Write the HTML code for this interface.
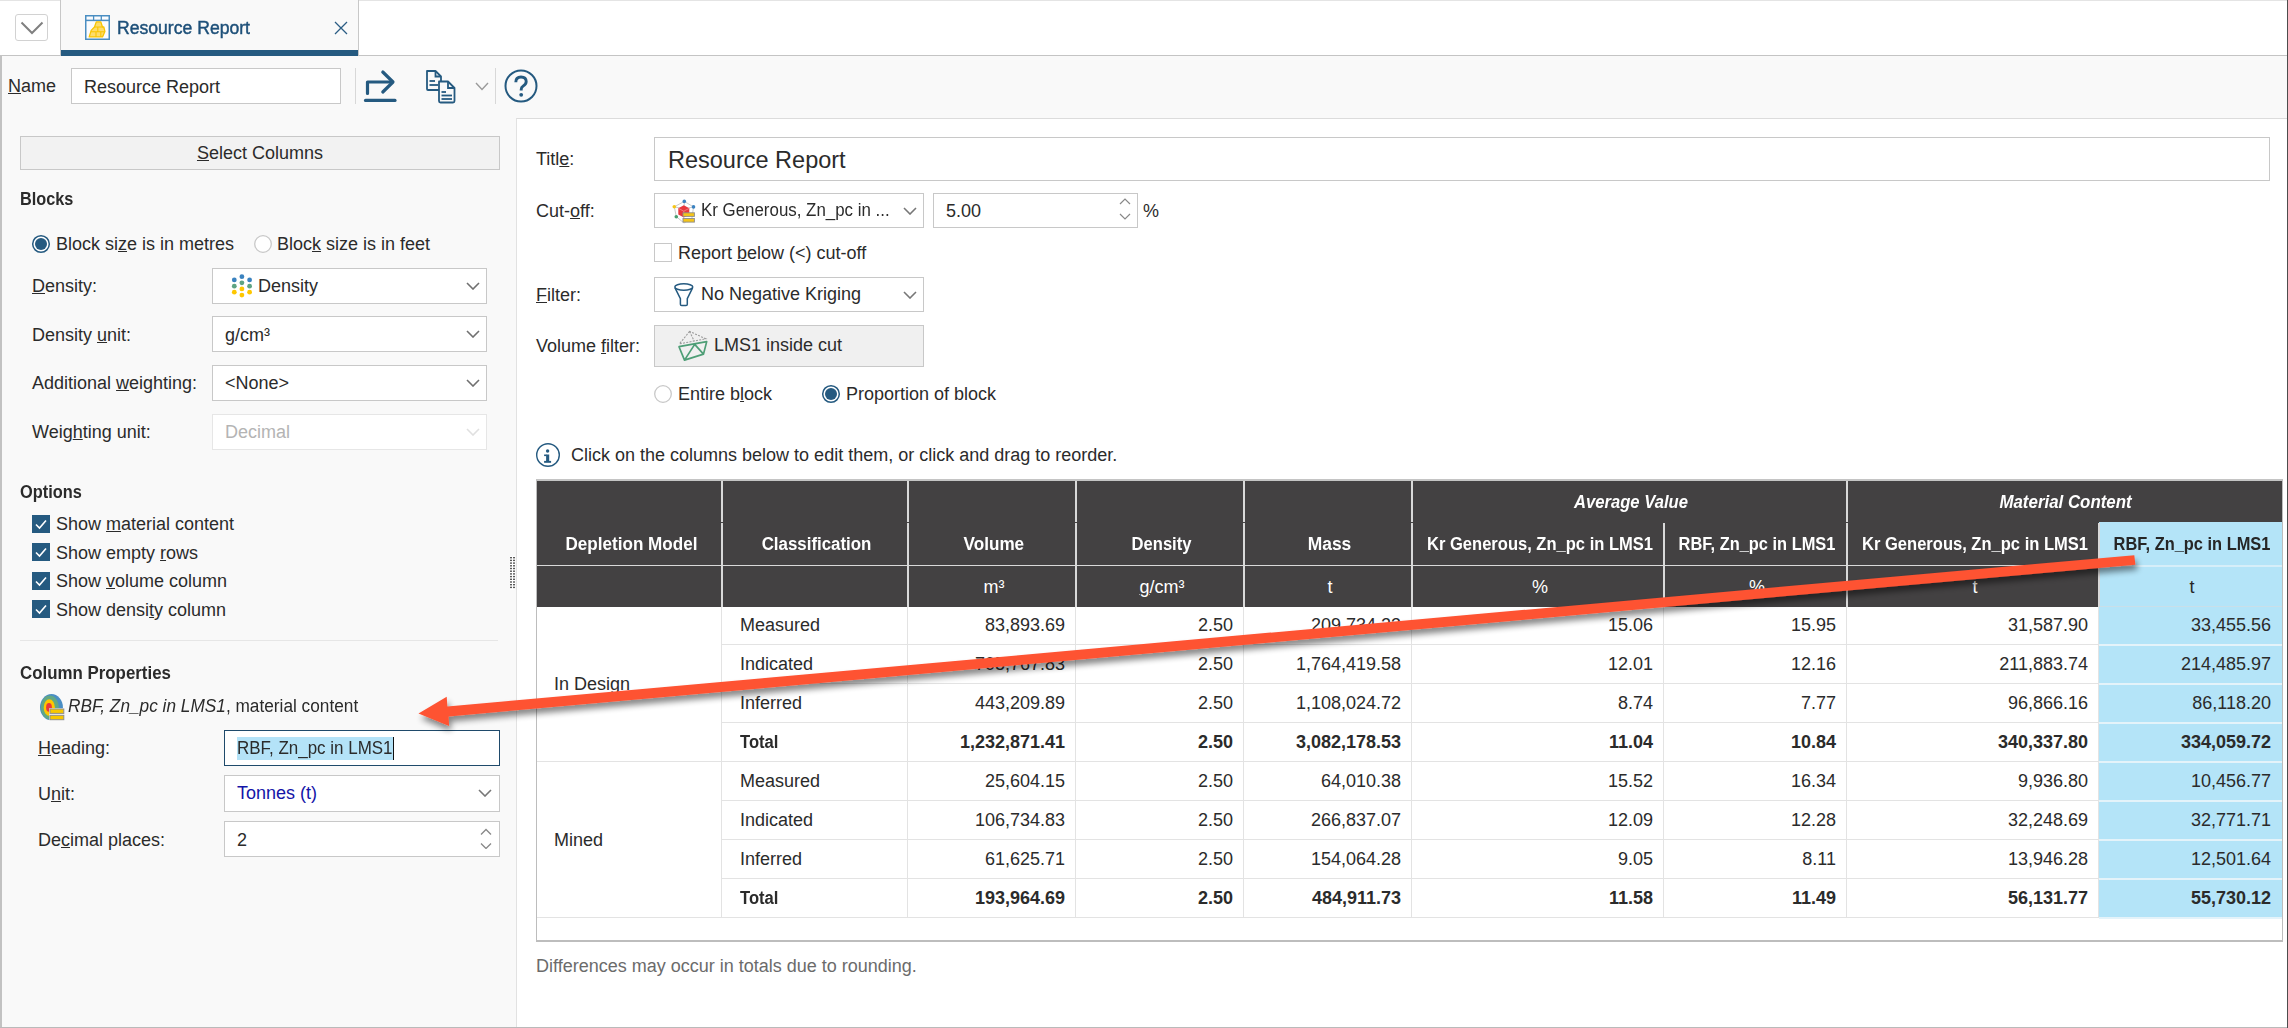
<!DOCTYPE html><html><head><meta charset="utf-8"><style>
html,body{margin:0;padding:0;}
body{width:2288px;height:1028px;position:relative;overflow:hidden;background:#fff;font-family:"Liberation Sans", sans-serif;}
.t{position:absolute;white-space:nowrap;line-height:20px;}
u{text-decoration:underline;text-underline-offset:1px;text-decoration-thickness:1px;}
</style></head><body>
<div style="position:absolute;left:0px;top:0px;width:2288px;height:55px;background:#fff"></div>
<div style="position:absolute;left:0px;top:0px;width:2288px;height:1px;background:#e4e4e4"></div>
<div style="position:absolute;left:0px;top:55px;width:2288px;height:1px;background:#c4c4c4"></div>
<div style="position:absolute;left:15px;top:14px;width:33px;height:27px;background:#fff;border:1px solid #d2d2d2;border-radius:3px;box-sizing:border-box"></div>
<svg width="24" height="14" style="position:absolute;left:20px;top:21px"><path d="M1.5 1.5 L12 12 L22.5 1.5" fill="none" stroke="#808080" stroke-width="2"/></svg>
<div style="position:absolute;left:60px;top:0px;width:299px;height:56px;background:#f9f9f9;border-left:1px solid #c8c8c8;border-right:1px solid #c8c8c8;box-sizing:border-box"></div>
<div style="position:absolute;left:61px;top:50px;width:297px;height:6px;background:#255a80"></div>
<svg width="26" height="26" viewBox="0 0 26 26" style="position:absolute;left:85px;top:15px">
<rect x="0.75" y="0.75" width="23.5" height="23.5" fill="#fbfcfe" stroke="#4a8ec2" stroke-width="1.5"/>
<line x1="0.5" y1="5.4" x2="24.5" y2="5.4" stroke="#4a8ec2" stroke-width="1.5"/>
<line x1="8.6" y1="1" x2="8.6" y2="5.4" stroke="#4a8ec2" stroke-width="1.3"/><line x1="16.3" y1="1" x2="16.3" y2="5.4" stroke="#4a8ec2" stroke-width="1.3"/>
<path d="M4.2 21.9 L6.2 15.4 L9.5 12 L11.3 6.9 L15.8 6.9 L17.5 12 L18.8 12 L19.9 16.4 L17.5 21.9 Z" fill="#fcdc6c" stroke="#f7c400" stroke-width="1.3" stroke-linejoin="round"/>
<path d="M9.5 12 L17.5 12 M6 16.8 L19.5 16.8 M12.8 12 L12.8 16.8 M11 16.8 L11 21.9 M15.8 16.8 L15.8 21.9" fill="none" stroke="#f7c400" stroke-width="1.1"/>
</svg>
<div class="t" style="left:117px;top:18px;font-size:18px;font-weight:normal;color:#1e5079;font-style:normal;-webkit-text-stroke:0.45px #1e5079"><span style="display:inline-block;transform:scaleX(0.9774);transform-origin:left">Resource Report</span></div>
<svg width="14" height="14" style="position:absolute;left:334px;top:21px"><path d="M1 1 L13 13 M13 1 L1 13" stroke="#2b5d84" stroke-width="1.3"/></svg>
<div style="position:absolute;left:0px;top:56px;width:2288px;height:972px;background:#f9f9f9"></div>
<div style="position:absolute;left:0px;top:56px;width:2px;height:972px;background:#c2c2c2"></div>
<div class="t" style="left:8px;top:76px;font-size:18px;font-weight:normal;color:#2b2b2b;font-style:normal;"><u>N</u>ame</div>
<div style="position:absolute;left:71px;top:68px;width:270px;height:36px;background:#fff;border:1px solid #c8c8c8;box-sizing:border-box"></div>
<div class="t" style="left:84px;top:77px;font-size:18px;font-weight:normal;color:#2b2b2b;font-style:normal;">Resource Report</div>
<div style="position:absolute;left:355px;top:68px;width:1px;height:36px;background:#d8d8d8"></div>
<div style="position:absolute;left:495px;top:68px;width:1px;height:36px;background:#d8d8d8"></div>
<svg width="36" height="36" viewBox="0 0 36 36" style="position:absolute;left:362px;top:68px">
<path d="M5.5 25.5 L5.5 14 L30 14" fill="none" stroke="#255a80" stroke-width="3.2" stroke-linecap="round" stroke-linejoin="round"/>
<path d="M20.8 4 L31 14 L20.8 24" fill="none" stroke="#255a80" stroke-width="3.2" stroke-linecap="round" stroke-linejoin="round"/>
<line x1="3.5" y1="32.4" x2="33" y2="32.4" stroke="#255a80" stroke-width="3.2" stroke-linecap="round"/>
</svg>
<svg width="34" height="36" viewBox="0 0 34 36" style="position:absolute;left:424px;top:68px">
<path d="M3 3 L11.5 3 L17 8.5 L17 21 Q17 22 16 22 L4 22 Q3 22 3 21 Z" fill="none" stroke="#255a80" stroke-width="1.8" stroke-linejoin="round"/>
<path d="M11.5 3 L11.5 8.5 L17 8.5" fill="none" stroke="#255a80" stroke-width="1.8"/>
<line x1="5.5" y1="13" x2="11" y2="13" stroke="#255a80" stroke-width="1.8"/><line x1="5.5" y1="17" x2="14" y2="17" stroke="#255a80" stroke-width="1.8"/>
<path d="M15 13.5 L24 13.5 L30.5 20 L30.5 33 Q30.5 34.5 29 34.5 L16.5 34.5 Q15 34.5 15 33 Z" fill="#f9f9f9" stroke="#255a80" stroke-width="1.8" stroke-linejoin="round"/>
<path d="M24 13.5 L24 20 L30.5 20" fill="none" stroke="#255a80" stroke-width="1.8"/>
<line x1="17.5" y1="24" x2="22" y2="24" stroke="#255a80" stroke-width="1.8"/><line x1="17.5" y1="27.5" x2="28" y2="27.5" stroke="#255a80" stroke-width="1.8"/><line x1="17.5" y1="31" x2="28" y2="31" stroke="#255a80" stroke-width="1.8"/>
</svg>
<svg width="14" height="9" style="position:absolute;left:475px;top:82px"><path d="M1 1 L7 7.5 L13 1" fill="none" stroke="#9a9a9a" stroke-width="1.4"/></svg>
<svg width="34" height="34" viewBox="0 0 34 34" style="position:absolute;left:504px;top:69px">
<circle cx="17" cy="17" r="15.5" fill="none" stroke="#255a80" stroke-width="2"/>
<path d="M11.8 13.2 Q11.8 8 17 8 Q22.2 8 22.2 12.6 Q22.2 15.4 19.2 17 Q17.2 18.1 17.2 20.6 L17.2 21.6" fill="none" stroke="#255a80" stroke-width="2.9"/>
<circle cx="17.2" cy="25.8" r="1.9" fill="#255a80"/>
</svg>
<div style="position:absolute;left:20px;top:136px;width:480px;height:34px;background:#f2f2f2;border:1px solid #c8c8c8;box-sizing:border-box"></div>
<div class="t" style="left:-40px;width:600px;top:143px;font-size:18px;font-weight:normal;color:#2b2b2b;font-style:normal;text-align:center;"><u>S</u>elect Columns</div>
<div class="t" style="left:20px;top:189px;font-size:18px;font-weight:bold;color:#2b2b2b;font-style:normal;"><span style="display:inline-block;transform:scaleX(0.9046);transform-origin:left">Blocks</span></div>
<svg width="20" height="20" style="position:absolute;left:31px;top:234px"><circle cx="10" cy="10" r="8.3" fill="#fff" stroke="#255a80" stroke-width="1.5"/><circle cx="10" cy="10" r="6" fill="#255a80"/></svg>
<div class="t" style="left:56px;top:234px;font-size:18px;font-weight:normal;color:#2b2b2b;font-style:normal;">Block si<u>z</u>e is in metres</div>
<svg width="20" height="20" style="position:absolute;left:253px;top:234px"><circle cx="10" cy="10" r="8.3" fill="#fff" stroke="#c8c8c8" stroke-width="1.3"/></svg>
<div class="t" style="left:277px;top:234px;font-size:18px;font-weight:normal;color:#2b2b2b;font-style:normal;">Bloc<u>k</u> size is in feet</div>
<div class="t" style="left:32px;top:276px;font-size:18px;font-weight:normal;color:#2b2b2b;font-style:normal;"><u>D</u>ensity:</div>
<div style="position:absolute;left:212px;top:268px;width:275px;height:36px;background:#fff;border:1px solid #c8c8c8;box-sizing:border-box"></div>
<svg width="26" height="26" style="position:absolute;left:229px;top:274px">
<circle cx="5.3" cy="5.9" r="2.4" fill="#3a82bf"/><circle cx="12.9" cy="2.7" r="2.4" fill="#3a82bf"/><circle cx="20.6" cy="5.9" r="2.4" fill="#3a82bf"/>
<circle cx="5.3" cy="12.2" r="2.4" fill="#5da383"/><circle cx="12.9" cy="8.8" r="2.4" fill="#5da383"/><circle cx="20.6" cy="12.2" r="2.4" fill="#5da383"/>
<circle cx="5.3" cy="18.2" r="2.4" fill="#fec700"/><circle cx="12.9" cy="14.9" r="2.4" fill="#fec700"/><circle cx="20.6" cy="18.2" r="2.4" fill="#fec700"/><circle cx="12.9" cy="21.1" r="2.4" fill="#fec700"/>
</svg>
<div class="t" style="left:258px;top:276px;font-size:18px;font-weight:normal;color:#2b2b2b;font-style:normal;">Density</div>
<svg width="14" height="8" viewBox="0 0 14 8" style="position:absolute;left:466px;top:281.5px"><path d="M1 1 L7 7 L13 1" fill="none" stroke="#707070" stroke-width="1.6"/></svg>
<div class="t" style="left:32px;top:325px;font-size:18px;font-weight:normal;color:#2b2b2b;font-style:normal;">Density <u>u</u>nit:</div>
<div style="position:absolute;left:212px;top:316px;width:275px;height:36px;background:#fff;border:1px solid #c8c8c8;box-sizing:border-box"></div>
<div class="t" style="left:225px;top:325px;font-size:18px;font-weight:normal;color:#2b2b2b;font-style:normal;">g/cm³</div>
<svg width="14" height="8" viewBox="0 0 14 8" style="position:absolute;left:466px;top:329.5px"><path d="M1 1 L7 7 L13 1" fill="none" stroke="#707070" stroke-width="1.6"/></svg>
<div class="t" style="left:32px;top:373px;font-size:18px;font-weight:normal;color:#2b2b2b;font-style:normal;">Additional <u>w</u>eighting:</div>
<div style="position:absolute;left:212px;top:365px;width:275px;height:36px;background:#fff;border:1px solid #c8c8c8;box-sizing:border-box"></div>
<div class="t" style="left:225px;top:373px;font-size:18px;font-weight:normal;color:#2b2b2b;font-style:normal;">&lt;None&gt;</div>
<svg width="14" height="8" viewBox="0 0 14 8" style="position:absolute;left:466px;top:378.5px"><path d="M1 1 L7 7 L13 1" fill="none" stroke="#707070" stroke-width="1.6"/></svg>
<div class="t" style="left:32px;top:422px;font-size:18px;font-weight:normal;color:#2b2b2b;font-style:normal;">Weig<u>h</u>ting unit:</div>
<div style="position:absolute;left:212px;top:414px;width:275px;height:36px;background:#fff;border:1px solid #e6e6e6;box-sizing:border-box"></div>
<div class="t" style="left:225px;top:422px;font-size:18px;font-weight:normal;color:#b4b4b4;font-style:normal;">Decimal</div>
<svg width="14" height="8" viewBox="0 0 14 8" style="position:absolute;left:466px;top:427.5px"><path d="M1 1 L7 7 L13 1" fill="none" stroke="#e0e0e0" stroke-width="1.6"/></svg>
<div class="t" style="left:20px;top:482px;font-size:18px;font-weight:bold;color:#2b2b2b;font-style:normal;"><span style="display:inline-block;transform:scaleX(0.9088);transform-origin:left">Options</span></div>
<svg width="18" height="18" style="position:absolute;left:32px;top:515px"><rect width="18" height="18" fill="#255a80"/><path d="M4 9.5 L7.5 13 L14 5.5" fill="none" stroke="#fff" stroke-width="1.6"/></svg>
<div class="t" style="left:56px;top:514px;font-size:18px;font-weight:normal;color:#2b2b2b;font-style:normal;">Show <u>m</u>aterial content</div>
<svg width="18" height="18" style="position:absolute;left:32px;top:543px"><rect width="18" height="18" fill="#255a80"/><path d="M4 9.5 L7.5 13 L14 5.5" fill="none" stroke="#fff" stroke-width="1.6"/></svg>
<div class="t" style="left:56px;top:543px;font-size:18px;font-weight:normal;color:#2b2b2b;font-style:normal;">Show empty <u>r</u>ows</div>
<svg width="18" height="18" style="position:absolute;left:32px;top:572px"><rect width="18" height="18" fill="#255a80"/><path d="M4 9.5 L7.5 13 L14 5.5" fill="none" stroke="#fff" stroke-width="1.6"/></svg>
<div class="t" style="left:56px;top:571px;font-size:18px;font-weight:normal;color:#2b2b2b;font-style:normal;">Show <u>v</u>olume column</div>
<svg width="18" height="18" style="position:absolute;left:32px;top:600px"><rect width="18" height="18" fill="#255a80"/><path d="M4 9.5 L7.5 13 L14 5.5" fill="none" stroke="#fff" stroke-width="1.6"/></svg>
<div class="t" style="left:56px;top:600px;font-size:18px;font-weight:normal;color:#2b2b2b;font-style:normal;">Show densi<u>t</u>y column</div>
<svg width="6" height="34" style="position:absolute;left:510px;top:556px"><rect x="0" y="0" width="5" height="34" fill="#fff"/><rect x="0" y="1.0" width="2" height="1.4" fill="#5a5a5a"/><rect x="3" y="1.0" width="2" height="1.4" fill="#5a5a5a"/><rect x="0" y="3.7" width="2" height="1.4" fill="#5a5a5a"/><rect x="3" y="3.7" width="2" height="1.4" fill="#5a5a5a"/><rect x="0" y="6.4" width="2" height="1.4" fill="#5a5a5a"/><rect x="3" y="6.4" width="2" height="1.4" fill="#5a5a5a"/><rect x="0" y="9.1" width="2" height="1.4" fill="#5a5a5a"/><rect x="3" y="9.1" width="2" height="1.4" fill="#5a5a5a"/><rect x="0" y="11.8" width="2" height="1.4" fill="#5a5a5a"/><rect x="3" y="11.8" width="2" height="1.4" fill="#5a5a5a"/><rect x="0" y="14.5" width="2" height="1.4" fill="#5a5a5a"/><rect x="3" y="14.5" width="2" height="1.4" fill="#5a5a5a"/><rect x="0" y="17.2" width="2" height="1.4" fill="#5a5a5a"/><rect x="3" y="17.2" width="2" height="1.4" fill="#5a5a5a"/><rect x="0" y="19.9" width="2" height="1.4" fill="#5a5a5a"/><rect x="3" y="19.9" width="2" height="1.4" fill="#5a5a5a"/><rect x="0" y="22.6" width="2" height="1.4" fill="#5a5a5a"/><rect x="3" y="22.6" width="2" height="1.4" fill="#5a5a5a"/><rect x="0" y="25.3" width="2" height="1.4" fill="#5a5a5a"/><rect x="3" y="25.3" width="2" height="1.4" fill="#5a5a5a"/><rect x="0" y="28.0" width="2" height="1.4" fill="#5a5a5a"/><rect x="3" y="28.0" width="2" height="1.4" fill="#5a5a5a"/><rect x="0" y="30.7" width="2" height="1.4" fill="#5a5a5a"/><rect x="3" y="30.7" width="2" height="1.4" fill="#5a5a5a"/></svg>
<div style="position:absolute;left:20px;top:640px;width:478px;height:1px;background:#e6e6e6"></div>
<div class="t" style="left:20px;top:663px;font-size:18px;font-weight:bold;color:#2b2b2b;font-style:normal;"><span style="display:inline-block;transform:scaleX(0.9371);transform-origin:left">Column Properties</span></div>
<svg width="28" height="30" style="position:absolute;left:39px;top:693px">
<ellipse cx="12.45" cy="14.2" rx="11.45" ry="13.1" fill="#4a8ec4"/>
<ellipse cx="10.8" cy="14.4" rx="9" ry="11.9" fill="#62a884"/>
<ellipse cx="10.3" cy="14.6" rx="5.6" ry="8.4" fill="#fec700"/>
<ellipse cx="10" cy="14.4" rx="2.9" ry="4.4" fill="#e8383d"/>
<rect x="10.2" y="15.2" width="15.2" height="13" fill="#fafafa"/>
<rect x="11" y="16" width="13.8" height="4.4" fill="#f8c800" stroke="#8e8e8e" stroke-width="1"/>
<rect x="11" y="22.3" width="13.8" height="4.4" fill="#f8c800" stroke="#8e8e8e" stroke-width="1"/>
</svg>
<div class="t" style="left:68px;top:696px;font-size:18px;font-weight:normal;color:#2b2b2b;font-style:normal;"><span style="display:inline-block;transform:scaleX(0.9583);transform-origin:left"><i>RBF, Zn_pc in LMS1</i>, material content</span></div>
<div class="t" style="left:38px;top:738px;font-size:18px;font-weight:normal;color:#2b2b2b;font-style:normal;"><u>H</u>eading:</div>
<div style="position:absolute;left:224px;top:730px;width:276px;height:36px;background:#fff;border:1.5px solid #1f4a6b;box-sizing:border-box"></div>
<div style="position:absolute;left:237px;top:737px;width:156px;height:23px;background:#b4e3f8"></div>
<div class="t" style="left:237px;top:738px;font-size:18px;font-weight:normal;color:#2b2b2b;font-style:normal;"><span style="display:inline-block;transform:scaleX(0.9420);transform-origin:left">RBF, Zn_pc in LMS1</span></div>
<div style="position:absolute;left:393px;top:737px;width:1px;height:23px;background:#111"></div>
<div class="t" style="left:38px;top:784px;font-size:18px;font-weight:normal;color:#2b2b2b;font-style:normal;">U<u>n</u>it:</div>
<div style="position:absolute;left:224px;top:775px;width:276px;height:37px;background:#fff;border:1px solid #c8c8c8;box-sizing:border-box"></div>
<div class="t" style="left:237px;top:783px;font-size:18px;font-weight:normal;color:#1414a8;font-style:normal;">Tonnes (t)</div>
<svg width="14" height="8" viewBox="0 0 14 8" style="position:absolute;left:478px;top:789px"><path d="M1 1 L7 7 L13 1" fill="none" stroke="#777" stroke-width="1.6"/></svg>
<div class="t" style="left:38px;top:830px;font-size:18px;font-weight:normal;color:#2b2b2b;font-style:normal;">De<u>c</u>imal places:</div>
<div style="position:absolute;left:224px;top:821px;width:276px;height:36px;background:#fff;border:1px solid #c8c8c8;box-sizing:border-box"></div>
<div class="t" style="left:237px;top:830px;font-size:18px;font-weight:normal;color:#2b2b2b;font-style:normal;">2</div>
<svg width="12" height="22" style="position:absolute;left:480px;top:827px"><path d="M1 7.5 L6 2.5 L11 7.5 M1 16.5 L6 21.5 L11 16.5" fill="none" stroke="#888" stroke-width="1.3"/></svg>
<div style="position:absolute;left:516px;top:118px;width:1771px;height:909px;background:#fff;border-left:1px solid #e2e2e2;border-top:1px solid #dcdcdc;box-sizing:border-box"></div>
<div class="t" style="left:536px;top:149px;font-size:18px;font-weight:normal;color:#2b2b2b;font-style:normal;">Titl<u>e</u>:</div>
<div style="position:absolute;left:654px;top:137px;width:1616px;height:44px;background:#fff;border:1px solid #c8c8c8;box-sizing:border-box"></div>
<div class="t" style="left:668px;top:149.5px;font-size:23.5px;font-weight:normal;color:#2b2b2b;font-style:normal;line-height:26px;margin-top:-3px">Resource Report</div>
<div class="t" style="left:536px;top:201px;font-size:18px;font-weight:normal;color:#2b2b2b;font-style:normal;">Cut-<u>o</u>ff:</div>
<div style="position:absolute;left:654px;top:193px;width:270px;height:35px;background:#fff;border:1px solid #c8c8c8;box-sizing:border-box"></div>
<svg width="28" height="28" style="position:absolute;left:670px;top:198px">
<path d="M14.3 3.4 L23.5 8.9 L22 20 L14 25 L6.3 18.7 L4.3 8.8 Z M4.3 8.8 L14 11 L23.5 8.9 M14.3 3.4 L14 11" fill="none" stroke="#c4c4c4" stroke-width="0.9"/>
<path d="M13.8 7.2 L19.3 10.3 L19.3 16.5 L13.8 19.6 L8.3 16.5 L8.3 10.3 Z" fill="#e8383d"/>
<path d="M8.3 10.3 L13.8 13.2 L19.3 10.3 M13.8 13.2 L13.8 19.6" fill="none" stroke="#f08a8c" stroke-width="0.8"/>
<circle cx="14.3" cy="3.4" r="1.8" fill="#3b82c0"/><circle cx="23.5" cy="8.9" r="1.8" fill="#3b82c0"/><circle cx="4.3" cy="8.8" r="1.8" fill="#f5c518"/><circle cx="6.3" cy="18.7" r="1.8" fill="#4a9e70"/>
<rect x="13" y="14.8" width="11.4" height="3.6" fill="#f5c518" stroke="#8c8c8c" stroke-width="0.9"/><rect x="13" y="20.5" width="11.4" height="3.6" fill="#f5c518" stroke="#8c8c8c" stroke-width="0.9"/>
</svg>
<div class="t" style="left:701px;top:200px;font-size:18px;font-weight:normal;color:#2b2b2b;font-style:normal;"><span style="display:inline-block;transform:scaleX(0.9379);transform-origin:left">Kr Generous, Zn_pc in ...</span></div>
<svg width="14" height="8" viewBox="0 0 14 8" style="position:absolute;left:903px;top:207px"><path d="M1 1 L7 7 L13 1" fill="none" stroke="#777" stroke-width="1.6"/></svg>
<div style="position:absolute;left:933px;top:193px;width:205px;height:35px;background:#fff;border:1px solid #c8c8c8;box-sizing:border-box"></div>
<div class="t" style="left:946px;top:201px;font-size:18px;font-weight:normal;color:#2b2b2b;font-style:normal;">5.00</div>
<svg width="12" height="24" style="position:absolute;left:1119px;top:197px"><path d="M1 7 L6 2 L11 7 M1 17 L6 22 L11 17" fill="none" stroke="#888" stroke-width="1.2"/></svg>
<div class="t" style="left:1143px;top:201px;font-size:18px;font-weight:normal;color:#2b2b2b;font-style:normal;">%</div>
<div style="position:absolute;left:654px;top:243px;width:18px;height:19px;background:#fff;border:1.3px solid #c8c8c8;box-sizing:border-box"></div>
<div class="t" style="left:678px;top:243px;font-size:18px;font-weight:normal;color:#2b2b2b;font-style:normal;">Report <u>b</u>elow (&lt;) cut-off</div>
<div class="t" style="left:536px;top:285px;font-size:18px;font-weight:normal;color:#2b2b2b;font-style:normal;"><u>F</u>ilter:</div>
<div style="position:absolute;left:654px;top:277px;width:270px;height:35px;background:#fff;border:1px solid #c8c8c8;box-sizing:border-box"></div>
<svg width="26" height="30" style="position:absolute;left:672px;top:281px"><ellipse cx="11.8" cy="6" rx="9" ry="3.2" fill="none" stroke="#255a80" stroke-width="1.5"/><path d="M3 6.8 L8.4 17.6 L8.4 23.3 Q8.4 24.6 9.7 24.6 L14 24.6 Q15.3 24.6 15.3 23.3 L15.3 17.6 L20.6 6.8" fill="none" stroke="#255a80" stroke-width="1.5" stroke-linejoin="round"/></svg>
<div class="t" style="left:701px;top:284px;font-size:18px;font-weight:normal;color:#2b2b2b;font-style:normal;">No Negative Kriging</div>
<svg width="14" height="8" viewBox="0 0 14 8" style="position:absolute;left:903px;top:291px"><path d="M1 1 L7 7 L13 1" fill="none" stroke="#777" stroke-width="1.6"/></svg>
<div class="t" style="left:536px;top:336px;font-size:18px;font-weight:normal;color:#2b2b2b;font-style:normal;">Volume <u>f</u>ilter:</div>
<div style="position:absolute;left:654px;top:325px;width:270px;height:42px;background:#f0f0f0;border:1px solid #c8c8c8;box-sizing:border-box"></div>
<svg width="34" height="34" style="position:absolute;left:676px;top:329px">
<path d="M13.6 2.4 L3.4 14.9 L29.8 9.8 Z M13.6 2.4 L18.2 12.1" fill="none" stroke="#9a9a9a" stroke-width="1.1" stroke-dasharray="2 1.3"/>
<path d="M3 17.7 L30.7 12.6 L27.5 25.1 L8.5 31.1 Z M18.7 15.4 L8.5 31.1 M18.7 15.4 L27.5 25.1" fill="none" stroke="#4e9e76" stroke-width="1.7" stroke-linejoin="round"/>
</svg>
<div class="t" style="left:714px;top:335px;font-size:18px;font-weight:normal;color:#2b2b2b;font-style:normal;">LMS1 inside cut</div>
<svg width="20" height="20" style="position:absolute;left:653px;top:384px"><circle cx="10" cy="10" r="8.3" fill="#fff" stroke="#c8c8c8" stroke-width="1.3"/></svg>
<div class="t" style="left:678px;top:384px;font-size:18px;font-weight:normal;color:#2b2b2b;font-style:normal;">Entire b<u>l</u>ock</div>
<svg width="20" height="20" style="position:absolute;left:821px;top:384px"><circle cx="10" cy="10" r="8.3" fill="#fff" stroke="#255a80" stroke-width="1.5"/><circle cx="10" cy="10" r="6" fill="#255a80"/></svg>
<div class="t" style="left:846px;top:384px;font-size:18px;font-weight:normal;color:#2b2b2b;font-style:normal;">Proportion of block</div>
<svg width="26" height="26" style="position:absolute;left:535px;top:442px"><circle cx="13" cy="13" r="11.3" fill="none" stroke="#255a80" stroke-width="1.4"/><circle cx="12.6" cy="9" r="1.7" fill="#255a80"/><rect x="11.1" y="12.5" width="3.1" height="7.5" fill="#255a80"/><rect x="9.1" y="12.5" width="2.5" height="1.6" fill="#255a80"/><rect x="9.1" y="18.9" width="7" height="1.9" fill="#255a80"/></svg>
<div class="t" style="left:571px;top:445px;font-size:18px;font-weight:normal;color:#2b2b2b;font-style:normal;">Click on the columns below to edit them, or click and drag to reorder.</div>
<div style="position:absolute;left:536px;top:479px;width:1747px;height:463px;background:#fff;border:1px solid #bdbdbd;border-top:2px solid #c4c4c4;border-bottom:2px solid #bdbdbd;box-sizing:border-box"></div>
<div style="position:absolute;left:537px;top:481px;width:1745px;height:126px;background:#434142"></div>
<div style="position:absolute;left:2099px;top:522px;width:183px;height:85px;background:#b4e4f8"></div>
<div style="position:absolute;left:721px;top:481px;width:2px;height:41px;background:#d9d9d9"></div>
<div style="position:absolute;left:721px;top:523px;width:2px;height:42px;background:#d9d9d9"></div>
<div style="position:absolute;left:721px;top:566px;width:2px;height:41px;background:#d9d9d9"></div>
<div style="position:absolute;left:907px;top:481px;width:2px;height:41px;background:#d9d9d9"></div>
<div style="position:absolute;left:907px;top:523px;width:2px;height:42px;background:#d9d9d9"></div>
<div style="position:absolute;left:907px;top:566px;width:2px;height:41px;background:#d9d9d9"></div>
<div style="position:absolute;left:1075px;top:481px;width:2px;height:41px;background:#d9d9d9"></div>
<div style="position:absolute;left:1075px;top:523px;width:2px;height:42px;background:#d9d9d9"></div>
<div style="position:absolute;left:1075px;top:566px;width:2px;height:41px;background:#d9d9d9"></div>
<div style="position:absolute;left:1243px;top:481px;width:2px;height:41px;background:#d9d9d9"></div>
<div style="position:absolute;left:1243px;top:523px;width:2px;height:42px;background:#d9d9d9"></div>
<div style="position:absolute;left:1243px;top:566px;width:2px;height:41px;background:#d9d9d9"></div>
<div style="position:absolute;left:1411px;top:481px;width:2px;height:41px;background:#d9d9d9"></div>
<div style="position:absolute;left:1411px;top:523px;width:2px;height:42px;background:#d9d9d9"></div>
<div style="position:absolute;left:1411px;top:566px;width:2px;height:41px;background:#d9d9d9"></div>
<div style="position:absolute;left:1663px;top:523px;width:2px;height:42px;background:#d9d9d9"></div>
<div style="position:absolute;left:1663px;top:566px;width:2px;height:41px;background:#d9d9d9"></div>
<div style="position:absolute;left:1846px;top:481px;width:2px;height:41px;background:#d9d9d9"></div>
<div style="position:absolute;left:1846px;top:523px;width:2px;height:42px;background:#d9d9d9"></div>
<div style="position:absolute;left:1846px;top:566px;width:2px;height:41px;background:#d9d9d9"></div>
<div style="position:absolute;left:2098px;top:523px;width:2px;height:42px;background:#d9d9d9"></div>
<div style="position:absolute;left:2098px;top:566px;width:2px;height:41px;background:#d9d9d9"></div>
<div style="position:absolute;left:537px;top:565px;width:1745px;height:1.3px;background:#d9d9d9"></div>
<div style="position:absolute;left:2099px;top:565px;width:183px;height:1.5px;background:#d6eef9"></div>
<div style="position:absolute;left:2099px;top:606px;width:183px;height:1px;background:#c9dfe9"></div>
<div class="t" style="left:331px;width:600px;top:534px;font-size:18px;font-weight:bold;color:#fff;font-style:normal;text-align:center;"><span style="display:inline-block;transform:scaleX(0.9496);transform-origin:center">Depletion Model</span></div>
<div class="t" style="left:517px;width:600px;top:534px;font-size:18px;font-weight:bold;color:#fff;font-style:normal;text-align:center;"><span style="display:inline-block;transform:scaleX(0.9372);transform-origin:center">Classification</span></div>
<div class="t" style="left:694px;width:600px;top:534px;font-size:18px;font-weight:bold;color:#fff;font-style:normal;text-align:center;"><span style="display:inline-block;transform:scaleX(0.9515);transform-origin:center">Volume</span></div>
<div class="t" style="left:862px;width:600px;top:534px;font-size:18px;font-weight:bold;color:#fff;font-style:normal;text-align:center;"><span style="display:inline-block;transform:scaleX(0.9211);transform-origin:center">Density</span></div>
<div class="t" style="left:1030px;width:600px;top:534px;font-size:18px;font-weight:bold;color:#fff;font-style:normal;text-align:center;"><span style="display:inline-block;transform:scaleX(0.9682);transform-origin:center">Mass</span></div>
<div class="t" style="left:1240px;width:600px;top:534px;font-size:18px;font-weight:bold;color:#fff;font-style:normal;text-align:center;"><span style="display:inline-block;transform:scaleX(0.9185);transform-origin:center">Kr Generous, Zn_pc in LMS1</span></div>
<div class="t" style="left:1457px;width:600px;top:534px;font-size:18px;font-weight:bold;color:#fff;font-style:normal;text-align:center;"><span style="display:inline-block;transform:scaleX(0.9115);transform-origin:center">RBF, Zn_pc in LMS1</span></div>
<div class="t" style="left:1675px;width:600px;top:534px;font-size:18px;font-weight:bold;color:#fff;font-style:normal;text-align:center;"><span style="display:inline-block;transform:scaleX(0.9185);transform-origin:center">Kr Generous, Zn_pc in LMS1</span></div>
<div class="t" style="left:1892px;width:600px;top:534px;font-size:18px;font-weight:bold;color:#262626;font-style:normal;text-align:center;"><span style="display:inline-block;transform:scaleX(0.9115);transform-origin:center">RBF, Zn_pc in LMS1</span></div>
<div class="t" style="left:1331px;width:600px;top:492px;font-size:17.5px;font-weight:bold;color:#fff;font-style:italic;text-align:center;"><span style="display:inline-block;transform:scaleX(0.9501);transform-origin:center">Average Value</span></div>
<div class="t" style="left:1766px;width:600px;top:492px;font-size:17.5px;font-weight:bold;color:#fff;font-style:italic;text-align:center;"><span style="display:inline-block;transform:scaleX(0.9649);transform-origin:center">Material Content</span></div>
<div class="t" style="left:694px;width:600px;top:577px;font-size:18px;font-weight:normal;color:#fff;font-style:normal;text-align:center;">m³</div>
<div class="t" style="left:862px;width:600px;top:577px;font-size:18px;font-weight:normal;color:#fff;font-style:normal;text-align:center;"><u>g</u>/cm³</div>
<div class="t" style="left:1030px;width:600px;top:577px;font-size:18px;font-weight:normal;color:#fff;font-style:normal;text-align:center;">t</div>
<div class="t" style="left:1240px;width:600px;top:577px;font-size:18px;font-weight:normal;color:#fff;font-style:normal;text-align:center;">%</div>
<div class="t" style="left:1457px;width:600px;top:577px;font-size:18px;font-weight:normal;color:#fff;font-style:normal;text-align:center;">%</div>
<div class="t" style="left:1675px;width:600px;top:577px;font-size:18px;font-weight:normal;color:#fff;font-style:normal;text-align:center;">t</div>
<div class="t" style="left:1892px;width:600px;top:577px;font-size:18px;font-weight:normal;color:#262626;font-style:normal;text-align:center;">t</div>
<div style="position:absolute;left:2099px;top:607px;width:183px;height:39px;background:#b4e4f8"></div>
<div style="position:absolute;left:2099px;top:646px;width:183px;height:39px;background:#b4e4f8"></div>
<div style="position:absolute;left:2099px;top:685px;width:183px;height:39px;background:#b4e4f8"></div>
<div style="position:absolute;left:2099px;top:724px;width:183px;height:39px;background:#b4e4f8"></div>
<div style="position:absolute;left:2099px;top:763px;width:183px;height:39px;background:#b4e4f8"></div>
<div style="position:absolute;left:2099px;top:802px;width:183px;height:39px;background:#b4e4f8"></div>
<div style="position:absolute;left:2099px;top:841px;width:183px;height:39px;background:#b4e4f8"></div>
<div style="position:absolute;left:2099px;top:880px;width:183px;height:39px;background:#b4e4f8"></div>
<div style="position:absolute;left:721px;top:607px;width:1px;height:311px;background:#e3e3e3"></div>
<div style="position:absolute;left:907px;top:607px;width:1px;height:311px;background:#e3e3e3"></div>
<div style="position:absolute;left:1075px;top:607px;width:1px;height:311px;background:#e3e3e3"></div>
<div style="position:absolute;left:1243px;top:607px;width:1px;height:311px;background:#e3e3e3"></div>
<div style="position:absolute;left:1411px;top:607px;width:1px;height:311px;background:#e3e3e3"></div>
<div style="position:absolute;left:1663px;top:607px;width:1px;height:311px;background:#e3e3e3"></div>
<div style="position:absolute;left:1846px;top:607px;width:1px;height:311px;background:#e3e3e3"></div>
<div style="position:absolute;left:2098px;top:607px;width:1px;height:311px;background:#e3e3e3"></div>
<div style="position:absolute;left:722px;top:644px;width:1560px;height:1px;background:#e3e3e3"></div>
<div style="position:absolute;left:722px;top:683px;width:1560px;height:1px;background:#e3e3e3"></div>
<div style="position:absolute;left:722px;top:722px;width:1560px;height:1px;background:#e3e3e3"></div>
<div style="position:absolute;left:537px;top:761px;width:1745px;height:1px;background:#e3e3e3"></div>
<div style="position:absolute;left:722px;top:800px;width:1560px;height:1px;background:#e3e3e3"></div>
<div style="position:absolute;left:722px;top:839px;width:1560px;height:1px;background:#e3e3e3"></div>
<div style="position:absolute;left:722px;top:878px;width:1560px;height:1px;background:#e3e3e3"></div>
<div style="position:absolute;left:537px;top:917px;width:1745px;height:1px;background:#e3e3e3"></div>
<div style="position:absolute;left:2099px;top:644px;width:183px;height:1.5px;background:#e4f3fa"></div>
<div style="position:absolute;left:2099px;top:683px;width:183px;height:1.5px;background:#e4f3fa"></div>
<div style="position:absolute;left:2099px;top:722px;width:183px;height:1.5px;background:#e4f3fa"></div>
<div style="position:absolute;left:2099px;top:761px;width:183px;height:1.5px;background:#e4f3fa"></div>
<div style="position:absolute;left:2099px;top:800px;width:183px;height:1.5px;background:#e4f3fa"></div>
<div style="position:absolute;left:2099px;top:839px;width:183px;height:1.5px;background:#e4f3fa"></div>
<div style="position:absolute;left:2099px;top:878px;width:183px;height:1.5px;background:#e4f3fa"></div>
<div style="position:absolute;left:2099px;top:917px;width:183px;height:1.5px;background:#e4f3fa"></div>
<div class="t" style="left:740px;top:615px;font-size:18px;font-weight:normal;color:#2b2b2b;font-style:normal;">Measured</div>
<div class="t" style="right:1223px;top:615px;font-size:18px;font-weight:normal;color:#2b2b2b;font-style:normal;text-align:right;">83,893.69</div>
<div class="t" style="right:1055px;top:615px;font-size:18px;font-weight:normal;color:#2b2b2b;font-style:normal;text-align:right;">2.50</div>
<div class="t" style="right:887px;top:615px;font-size:18px;font-weight:normal;color:#2b2b2b;font-style:normal;text-align:right;">209,734.23</div>
<div class="t" style="right:635px;top:615px;font-size:18px;font-weight:normal;color:#2b2b2b;font-style:normal;text-align:right;">15.06</div>
<div class="t" style="right:452px;top:615px;font-size:18px;font-weight:normal;color:#2b2b2b;font-style:normal;text-align:right;">15.95</div>
<div class="t" style="right:200px;top:615px;font-size:18px;font-weight:normal;color:#2b2b2b;font-style:normal;text-align:right;">31,587.90</div>
<div class="t" style="right:17px;top:615px;font-size:18px;font-weight:normal;color:#2b2b2b;font-style:normal;text-align:right;">33,455.56</div>
<div class="t" style="left:740px;top:654px;font-size:18px;font-weight:normal;color:#2b2b2b;font-style:normal;">Indicated</div>
<div class="t" style="right:1223px;top:654px;font-size:18px;font-weight:normal;color:#2b2b2b;font-style:normal;text-align:right;">705,767.83</div>
<div class="t" style="right:1055px;top:654px;font-size:18px;font-weight:normal;color:#2b2b2b;font-style:normal;text-align:right;">2.50</div>
<div class="t" style="right:887px;top:654px;font-size:18px;font-weight:normal;color:#2b2b2b;font-style:normal;text-align:right;">1,764,419.58</div>
<div class="t" style="right:635px;top:654px;font-size:18px;font-weight:normal;color:#2b2b2b;font-style:normal;text-align:right;">12.01</div>
<div class="t" style="right:452px;top:654px;font-size:18px;font-weight:normal;color:#2b2b2b;font-style:normal;text-align:right;">12.16</div>
<div class="t" style="right:200px;top:654px;font-size:18px;font-weight:normal;color:#2b2b2b;font-style:normal;text-align:right;">211,883.74</div>
<div class="t" style="right:17px;top:654px;font-size:18px;font-weight:normal;color:#2b2b2b;font-style:normal;text-align:right;">214,485.97</div>
<div class="t" style="left:740px;top:693px;font-size:18px;font-weight:normal;color:#2b2b2b;font-style:normal;">Inferred</div>
<div class="t" style="right:1223px;top:693px;font-size:18px;font-weight:normal;color:#2b2b2b;font-style:normal;text-align:right;">443,209.89</div>
<div class="t" style="right:1055px;top:693px;font-size:18px;font-weight:normal;color:#2b2b2b;font-style:normal;text-align:right;">2.50</div>
<div class="t" style="right:887px;top:693px;font-size:18px;font-weight:normal;color:#2b2b2b;font-style:normal;text-align:right;">1,108,024.72</div>
<div class="t" style="right:635px;top:693px;font-size:18px;font-weight:normal;color:#2b2b2b;font-style:normal;text-align:right;">8.74</div>
<div class="t" style="right:452px;top:693px;font-size:18px;font-weight:normal;color:#2b2b2b;font-style:normal;text-align:right;">7.77</div>
<div class="t" style="right:200px;top:693px;font-size:18px;font-weight:normal;color:#2b2b2b;font-style:normal;text-align:right;">96,866.16</div>
<div class="t" style="right:17px;top:693px;font-size:18px;font-weight:normal;color:#2b2b2b;font-style:normal;text-align:right;">86,118.20</div>
<div class="t" style="left:740px;top:732px;font-size:18px;font-weight:bold;color:#2b2b2b;font-style:normal;"><span style="display:inline-block;transform:scaleX(0.9215);transform-origin:left">Total</span></div>
<div class="t" style="right:1223px;top:732px;font-size:18px;font-weight:bold;color:#2b2b2b;font-style:normal;text-align:right;">1,232,871.41</div>
<div class="t" style="right:1055px;top:732px;font-size:18px;font-weight:bold;color:#2b2b2b;font-style:normal;text-align:right;">2.50</div>
<div class="t" style="right:887px;top:732px;font-size:18px;font-weight:bold;color:#2b2b2b;font-style:normal;text-align:right;">3,082,178.53</div>
<div class="t" style="right:635px;top:732px;font-size:18px;font-weight:bold;color:#2b2b2b;font-style:normal;text-align:right;">11.04</div>
<div class="t" style="right:452px;top:732px;font-size:18px;font-weight:bold;color:#2b2b2b;font-style:normal;text-align:right;">10.84</div>
<div class="t" style="right:200px;top:732px;font-size:18px;font-weight:bold;color:#2b2b2b;font-style:normal;text-align:right;">340,337.80</div>
<div class="t" style="right:17px;top:732px;font-size:18px;font-weight:bold;color:#2b2b2b;font-style:normal;text-align:right;">334,059.72</div>
<div class="t" style="left:740px;top:771px;font-size:18px;font-weight:normal;color:#2b2b2b;font-style:normal;">Measured</div>
<div class="t" style="right:1223px;top:771px;font-size:18px;font-weight:normal;color:#2b2b2b;font-style:normal;text-align:right;">25,604.15</div>
<div class="t" style="right:1055px;top:771px;font-size:18px;font-weight:normal;color:#2b2b2b;font-style:normal;text-align:right;">2.50</div>
<div class="t" style="right:887px;top:771px;font-size:18px;font-weight:normal;color:#2b2b2b;font-style:normal;text-align:right;">64,010.38</div>
<div class="t" style="right:635px;top:771px;font-size:18px;font-weight:normal;color:#2b2b2b;font-style:normal;text-align:right;">15.52</div>
<div class="t" style="right:452px;top:771px;font-size:18px;font-weight:normal;color:#2b2b2b;font-style:normal;text-align:right;">16.34</div>
<div class="t" style="right:200px;top:771px;font-size:18px;font-weight:normal;color:#2b2b2b;font-style:normal;text-align:right;">9,936.80</div>
<div class="t" style="right:17px;top:771px;font-size:18px;font-weight:normal;color:#2b2b2b;font-style:normal;text-align:right;">10,456.77</div>
<div class="t" style="left:740px;top:810px;font-size:18px;font-weight:normal;color:#2b2b2b;font-style:normal;">Indicated</div>
<div class="t" style="right:1223px;top:810px;font-size:18px;font-weight:normal;color:#2b2b2b;font-style:normal;text-align:right;">106,734.83</div>
<div class="t" style="right:1055px;top:810px;font-size:18px;font-weight:normal;color:#2b2b2b;font-style:normal;text-align:right;">2.50</div>
<div class="t" style="right:887px;top:810px;font-size:18px;font-weight:normal;color:#2b2b2b;font-style:normal;text-align:right;">266,837.07</div>
<div class="t" style="right:635px;top:810px;font-size:18px;font-weight:normal;color:#2b2b2b;font-style:normal;text-align:right;">12.09</div>
<div class="t" style="right:452px;top:810px;font-size:18px;font-weight:normal;color:#2b2b2b;font-style:normal;text-align:right;">12.28</div>
<div class="t" style="right:200px;top:810px;font-size:18px;font-weight:normal;color:#2b2b2b;font-style:normal;text-align:right;">32,248.69</div>
<div class="t" style="right:17px;top:810px;font-size:18px;font-weight:normal;color:#2b2b2b;font-style:normal;text-align:right;">32,771.71</div>
<div class="t" style="left:740px;top:849px;font-size:18px;font-weight:normal;color:#2b2b2b;font-style:normal;">Inferred</div>
<div class="t" style="right:1223px;top:849px;font-size:18px;font-weight:normal;color:#2b2b2b;font-style:normal;text-align:right;">61,625.71</div>
<div class="t" style="right:1055px;top:849px;font-size:18px;font-weight:normal;color:#2b2b2b;font-style:normal;text-align:right;">2.50</div>
<div class="t" style="right:887px;top:849px;font-size:18px;font-weight:normal;color:#2b2b2b;font-style:normal;text-align:right;">154,064.28</div>
<div class="t" style="right:635px;top:849px;font-size:18px;font-weight:normal;color:#2b2b2b;font-style:normal;text-align:right;">9.05</div>
<div class="t" style="right:452px;top:849px;font-size:18px;font-weight:normal;color:#2b2b2b;font-style:normal;text-align:right;">8.11</div>
<div class="t" style="right:200px;top:849px;font-size:18px;font-weight:normal;color:#2b2b2b;font-style:normal;text-align:right;">13,946.28</div>
<div class="t" style="right:17px;top:849px;font-size:18px;font-weight:normal;color:#2b2b2b;font-style:normal;text-align:right;">12,501.64</div>
<div class="t" style="left:740px;top:888px;font-size:18px;font-weight:bold;color:#2b2b2b;font-style:normal;"><span style="display:inline-block;transform:scaleX(0.9215);transform-origin:left">Total</span></div>
<div class="t" style="right:1223px;top:888px;font-size:18px;font-weight:bold;color:#2b2b2b;font-style:normal;text-align:right;">193,964.69</div>
<div class="t" style="right:1055px;top:888px;font-size:18px;font-weight:bold;color:#2b2b2b;font-style:normal;text-align:right;">2.50</div>
<div class="t" style="right:887px;top:888px;font-size:18px;font-weight:bold;color:#2b2b2b;font-style:normal;text-align:right;">484,911.73</div>
<div class="t" style="right:635px;top:888px;font-size:18px;font-weight:bold;color:#2b2b2b;font-style:normal;text-align:right;">11.58</div>
<div class="t" style="right:452px;top:888px;font-size:18px;font-weight:bold;color:#2b2b2b;font-style:normal;text-align:right;">11.49</div>
<div class="t" style="right:200px;top:888px;font-size:18px;font-weight:bold;color:#2b2b2b;font-style:normal;text-align:right;">56,131.77</div>
<div class="t" style="right:17px;top:888px;font-size:18px;font-weight:bold;color:#2b2b2b;font-style:normal;text-align:right;">55,730.12</div>
<div class="t" style="left:554px;top:674px;font-size:18px;font-weight:normal;color:#2b2b2b;font-style:normal;">In Design</div>
<div class="t" style="left:554px;top:830px;font-size:18px;font-weight:normal;color:#2b2b2b;font-style:normal;">Mined</div>
<div class="t" style="left:536px;top:956px;font-size:18px;font-weight:normal;color:#6b6b6b;font-style:normal;">Differences may occur in totals due to rounding.</div>
<div style="position:absolute;left:0px;top:1027px;width:2287px;height:1px;background:#bababa"></div>
<div style="position:absolute;left:2287px;top:0px;width:1px;height:1028px;background:#4d4d4d"></div>
<svg width="2288" height="1028" style="position:absolute;left:0;top:0;pointer-events:none">
<defs><filter id="sh" x="-10%" y="-50%" width="120%" height="200%"><feGaussianBlur in="SourceAlpha" stdDeviation="3"/><feOffset dx="2" dy="5" result="b"/><feComponentTransfer><feFuncA type="linear" slope="0.48"/></feComponentTransfer><feMerge><feMergeNode/><feMergeNode in="SourceGraphic"/></feMerge></filter></defs>
<path filter="url(#sh)" fill="#fe5233" d="M2134.3 555.2 L2135.4 564.7 L448.6 716.4 L449.1 726 L418.5 713.5 L446.7 696.8 L447.4 706.4 Z"/>
</svg>
</body></html>
